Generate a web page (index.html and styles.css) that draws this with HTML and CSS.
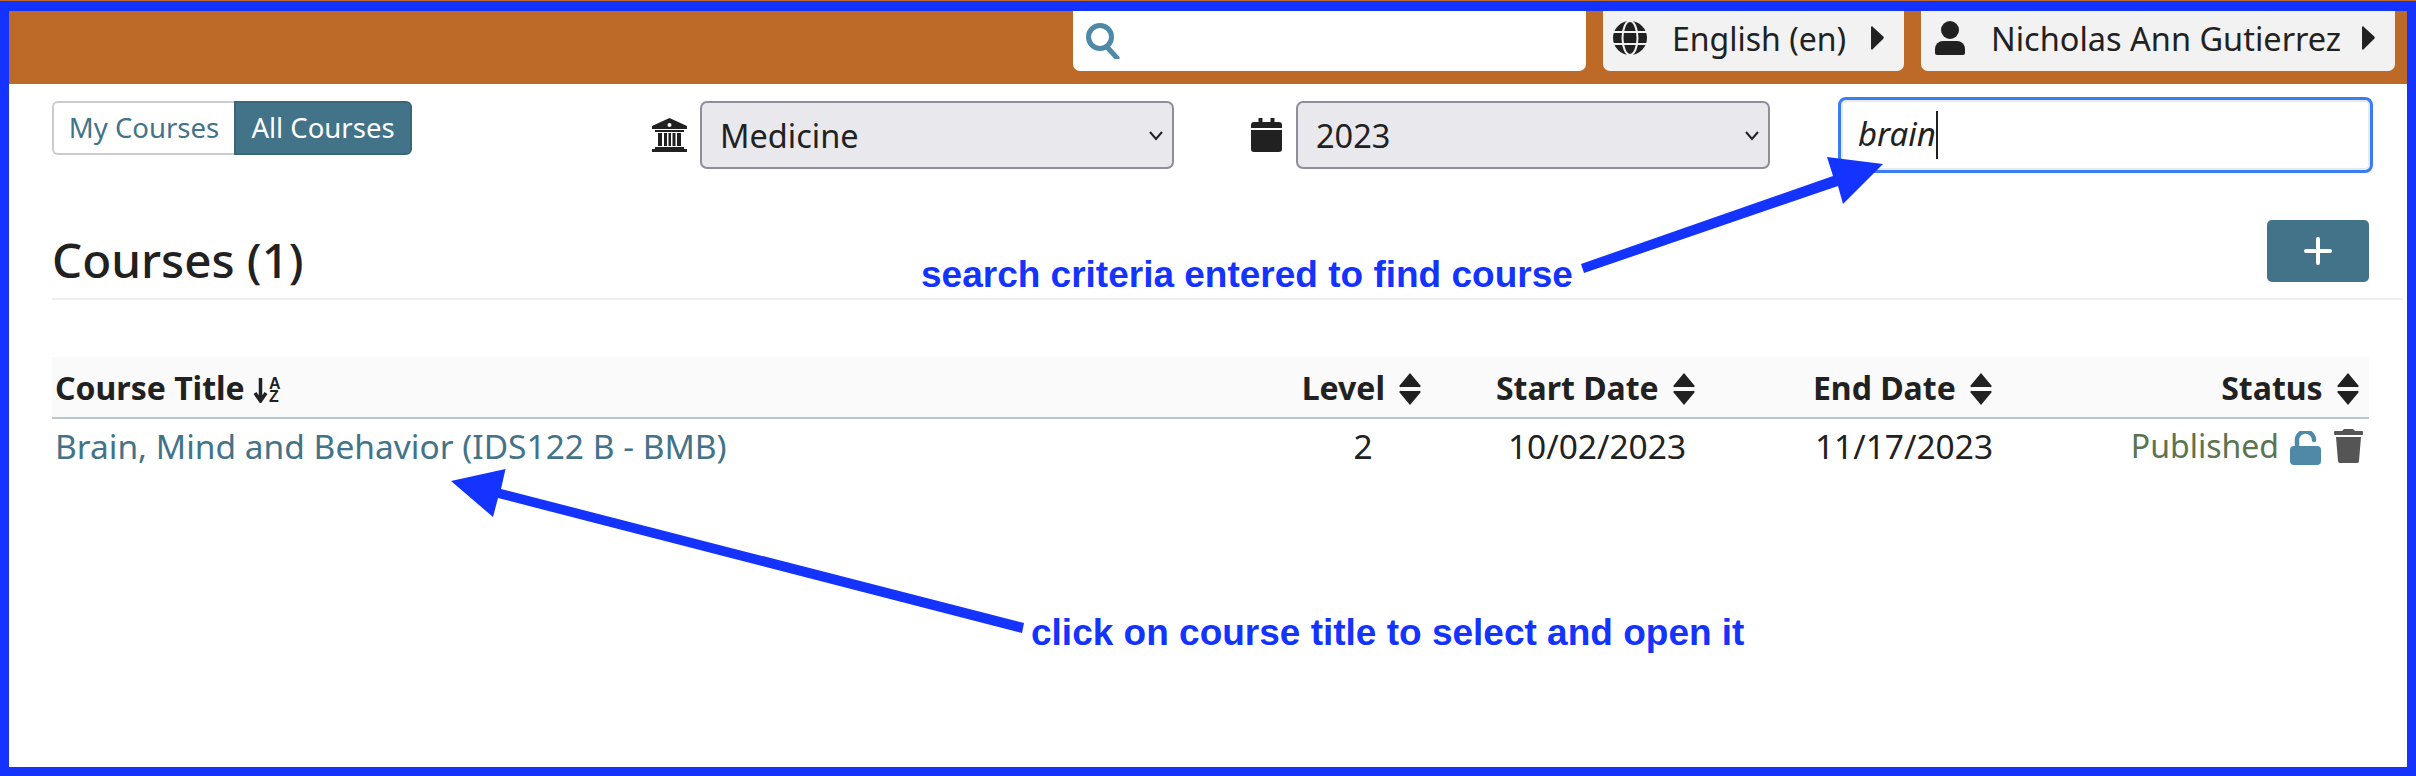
FILE: index.html
```html
<!DOCTYPE html>
<html lang="en">
  <head>
    <meta charset="UTF-8" />
    <title>Courses</title>
    <link rel="stylesheet" href="styles.css">
  </head>
  <body>
    <div class="frame">
      <header class="topbar">
        <div class="top-search">
          <svg class="top-search-icon" viewBox="0 0 34 36"><circle cx="14" cy="14" r="11.500" fill="none" stroke="#4f89a8" stroke-width="5"/><path d="M21 24l10 11" stroke="#4f89a8" stroke-width="5" stroke-linecap="round"/></svg>
        </div>
        <div class="top-menu top-lang">
          <svg class="top-icon" viewBox="0 0 34 34"><circle cx="17" cy="17" r="17" fill="#212121"/><g fill="none" stroke="#f2f2f2" stroke-width="2"><ellipse cx="17" cy="17" rx="7.500" ry="17"/><path d="M0 11h34M0 23h34"/></g></svg>
          <span class="top-label">English (en)</span>
          <svg class="top-caret" viewBox="0 0 14 26"><path d="M2 1l11 10a2 2 0 0 1 0 3L2 25a1 1 0 0 1-2-1V2a1 1 0 0 1 2-1z" fill="#212121"/></svg>
        </div>
        <div class="top-menu top-user">
          <svg class="top-icon" viewBox="0 0 30 34"><circle cx="15" cy="9" r="9" fill="#212121"/><path d="M8 20h14a8 8 0 0 1 8 8v4a2 2 0 0 1-2 2H2a2 2 0 0 1-2-2v-4a8 8 0 0 1 8-8z" fill="#212121"/></svg>
          <span class="top-label">Nicholas Ann Gutierrez</span>
          <svg class="top-caret" viewBox="0 0 14 26"><path d="M2 1l11 10a2 2 0 0 1 0 3L2 25a1 1 0 0 1-2-1V2a1 1 0 0 1 2-1z" fill="#212121"/></svg>
        </div>
      </header>

      <main class="content">
        <div class="filters">
          <div class="toggle">
            <a class="toggle-item">My Courses</a>
            <a class="toggle-item active">All Courses</a>
          </div>
          <div class="filter filter-school">
            <svg class="filter-icon" viewBox="0 0 35 34"><path d="M17.500 0L35 8v3H0V8z" fill="#212121"/><circle cx="17.500" cy="7" r="2" fill="#fff"/><path d="M3 12h29v2H3zM6 15h4v13H6zM12 15h3v13h-3zM16.500 15h2.500v13h-2.500zM20.500 15h3v13h-3zM25 15h4v13h-4zM3 29h29v2H3zM0 31h35v3H0z" fill="#212121"/></svg>
            <div class="select-wrap">
              <select class="select"><option>Medicine</option></select>
              <svg class="chevron" viewBox="0 0 14 10"><path d="M1 1l6 7 6-7" fill="none" stroke="#212121" stroke-width="2"/></svg>
            </div>
          </div>
          <div class="filter filter-year">
            <svg class="filter-icon cal" viewBox="0 0 31 34"><path d="M8 0h3v5H8zM20 0h3v5h-3z" fill="#212121" stroke="#212121" stroke-linejoin="round"/><path d="M3 4h25a3 3 0 0 1 3 3v3H0V7a3 3 0 0 1 3-3zM0 12h31v19a3 3 0 0 1-3 3H3a3 3 0 0 1-3-3z" fill="#212121"/></svg>
            <div class="select-wrap">
              <select class="select"><option>2023</option></select>
              <svg class="chevron" viewBox="0 0 14 10"><path d="M1 1l6 7 6-7" fill="none" stroke="#212121" stroke-width="2"/></svg>
            </div>
          </div>
          <div class="course-search">
            <input class="course-search-input" type="text" value="brain" />
            <span class="caret"></span>
          </div>
        </div>

        <div class="title-row">
          <h1>Courses (1)</h1>
          <button class="add-btn" type="button">
            <svg viewBox="0 0 28 28"><path d="M14 2v24M2 14h24" stroke="#fff" stroke-width="4" stroke-linecap="round"/></svg>
          </button>
        </div>

        <table class="courses">
          <colgroup>
            <col class="col-title" /><col class="col-level" /><col class="col-start" /><col class="col-end" /><col class="col-status" />
          </colgroup>
          <thead>
            <tr>
              <th class="left">Course Title
                <span class="sort-alpha">
                  <svg viewBox="0 0 15 26"><path d="M7.500 1v22M2 16l5.500 8 5.500-8" fill="none" stroke="#212121" stroke-width="3.500"/></svg>
                  <span class="sort-letters"><span>A</span><span>Z</span></span>
                </span>
              </th>
              <th>Level <svg class="sort" viewBox="0 0 22 32"><path d="M11 0l10 12a1 1 0 0 1-1 2H2a1 1 0 0 1-1-2zM2 18h18a1 1 0 0 1 1 2L11 32 1 20a1 1 0 0 1 1-2z" fill="#212121"/></svg></th>
              <th>Start Date <svg class="sort" viewBox="0 0 22 32"><path d="M11 0l10 12a1 1 0 0 1-1 2H2a1 1 0 0 1-1-2zM2 18h18a1 1 0 0 1 1 2L11 32 1 20a1 1 0 0 1 1-2z" fill="#212121"/></svg></th>
              <th>End Date <svg class="sort" viewBox="0 0 22 32"><path d="M11 0l10 12a1 1 0 0 1-1 2H2a1 1 0 0 1-1-2zM2 18h18a1 1 0 0 1 1 2L11 32 1 20a1 1 0 0 1 1-2z" fill="#212121"/></svg></th>
              <th class="right">Status <svg class="sort" viewBox="0 0 22 32"><path d="M11 0l10 12a1 1 0 0 1-1 2H2a1 1 0 0 1-1-2zM2 18h18a1 1 0 0 1 1 2L11 32 1 20a1 1 0 0 1 1-2z" fill="#212121"/></svg></th>
            </tr>
          </thead>
          <tbody>
            <tr>
              <td class="left"><a class="course-link">Brain, Mind and Behavior (IDS122 B - BMB)</a></td>
              <td>2</td>
              <td>10/02/2023</td>
              <td>11/17/2023</td>
              <td class="right">
                <div class="status-cell">
                  <span class="published">Published</span>
                  <svg class="lock" viewBox="0 0 31 34"><path d="M7 15V9a8.500 8.500 0 0 1 17 0" fill="none" stroke="#4f89a8" stroke-width="4.500" stroke-linecap="round"/><rect x="0" y="15" width="31" height="19" rx="4" fill="#4f89a8"/></svg>
                  <svg class="trash" viewBox="0 0 29 34"><path d="M10 0h9l2 2h7a1 1 0 0 1 1 1v2a1 1 0 0 1-1 1H1a1 1 0 0 1-1-1V3a1 1 0 0 1 1-1h7z" fill="#555"/><path d="M2 8h25l-2 24a2 2 0 0 1-2 2H6a2 2 0 0 1-2-2z" fill="#555"/></svg>
                </div>
              </td>
            </tr>
          </tbody>
        </table>
      </main>

      <!-- annotations drawn on top of the screenshot -->
      <svg class="arrows" viewBox="0 0 2416 776">
        <path d="M1581 263L1833 175L1827 156L1883 163L1843 203L1838 185L1584 272z" />
        <path d="M1024 622L501 488L505.500 468L451 480L493 516L498 497L1022 632z" />
      </svg>
      <div class="note note-search">search criteria entered to find course</div>
      <div class="note note-title">click on course title to select and open it</div>
    </div>
  </body>
</html>
```

FILE: styles.css
```css
* {
  margin: 0;
  padding: 0;
  box-sizing: border-box;
}
body {
  width: 2416px;
  height: 776px;
  overflow: hidden;
  background: #bd6927;
  font-family: "Noto Sans", sans-serif;
  font-size: 32px;
  color: #212121;
  padding-top: 1px;
}
.frame {
  position: relative;
  height: 775px;
  background: #fff;
  border: 9px solid #1433ff;
  border-top-width: 10px;
}

/* Top bar */
.topbar {
  height: 73px;
  background: #bd6927;
  display: flex;
  justify-content: flex-end;
  align-items: flex-start;
  gap: 17px;
  padding-right: 12px;
}
.top-search {
  width: 513px;
  height: 60px;
  background: #fff;
  border-radius: 0 0 7px 7px;
  display: flex;
  align-items: center;
  padding-left: 13px;
}
.top-search-icon {
  width: 34px;
  height: 36px;
}
.top-menu {
  height: 60px;
  background: #f2f2f2;
  border-radius: 0 0 7px 7px;
  display: flex;
  align-items: center;
  padding-bottom: 6px;
}
.top-lang {
  width: 301px;
  padding-left: 10px;
}
.top-user {
  width: 474px;
  padding-left: 12px;
}
.top-icon {
  width: 34px;
  height: 34px;
  flex: none;
}
.top-label {
  margin-left: 25px;
  font-size: 32px;
  white-space: nowrap;
  flex: 1;
}
.top-user .top-label {
  margin-left: 24px;
  font-size: 32.500px;
}
.top-caret {
  width: 13px;
  height: 24px;
  margin-right: 20px;
  flex: none;
}

/* Filters */
.content {
  padding: 0 4px 0 43px;
}
.filters {
  display: flex;
  align-items: flex-start;
  height: 136px;
  padding-top: 17px;
}
.toggle {
  display: flex;
  width: 360px;
  height: 54px;
  font-size: 27.500px;
}
.toggle-item {
  display: flex;
  align-items: center;
  justify-content: center;
  width: 182px;
  padding-bottom: 2px;
  color: #427389;
  background: #fff;
  border: 2px solid #ccc;
  border-right: none;
  border-radius: 6px 0 0 6px;
}
.toggle-item.active {
  width: 178px;
  color: #fff;
  background: #427389;
  border: 2px solid #3a667a;
  border-radius: 0 6px 6px 0;
}
.filter {
  display: flex;
  align-items: center;
  height: 68px;
}
.filter-school {
  margin-left: 240px;
}
.filter-year {
  margin-left: 77px;
}
.filter-icon {
  width: 35px;
  height: 34px;
  margin-right: 13px;
  flex: none;
}
.filter-icon.cal {
  width: 31px;
  margin-right: 14px;
}
.select-wrap {
  position: relative;
  width: 474px;
  height: 68px;
}
.select {
  appearance: none;
  width: 100%;
  height: 100%;
  padding: 0 0 0 18px;
  font: inherit;
  font-size: 32.500px;
  color: #212121;
  background: #e8e8ed;
  border: 2px solid #8e8e99;
  border-radius: 7px;
}
.chevron {
  position: absolute;
  right: 11px;
  top: 30px;
  width: 14px;
  height: 10px;
}
.course-search {
  position: relative;
  width: 535px;
  height: 76px;
  margin: -4px 0 0 68px;
}
.course-search-input {
  width: 100%;
  height: 100%;
  padding: 0 0 4px 17px;
  font: italic 33px "Noto Sans", sans-serif;
  color: #212121;
  border: 3px solid #3b7cf5;
  border-radius: 8px;
  box-shadow: inset 0 0 0 2px #e6ebf2;
  outline: none;
}
.caret {
  position: absolute;
  left: 98px;
  top: 14px;
  width: 2px;
  height: 48px;
  background: #212121;
}

/* Heading */
.title-row {
  display: flex;
  justify-content: space-between;
  align-items: center;
  height: 80px;
  padding-right: 34px;
  border-bottom: 2px solid #eee;
}
h1 {
  font-size: 47.500px;
  font-weight: 500;
  line-height: 1;
  margin-top: 2px;
}
.add-btn {
  width: 102px;
  height: 62px;
  margin-top: -16px;
  background: #427389;
  border: none;
  border-radius: 5px;
  display: flex;
  align-items: center;
  justify-content: center;
}
.add-btn svg {
  width: 28px;
  height: 28px;
}

/* Table */
.courses {
  width: 2317px;
  margin-top: 57px;
  border-collapse: collapse;
  table-layout: fixed;
}
.col-title { width: 1218px; }
.col-level { width: 186px; }
.col-start { width: 282px; }
.col-end { width: 332px; }
.col-status { width: 299px; }
th {
  height: 61px;
  padding-right: 3px;
  background: #fafafa;
  border-bottom: 2px solid #b9c8c9;
  font-weight: 700;
  font-size: 32px;
  text-align: center;
  white-space: nowrap;
}
td {
  height: 56px;
  padding-bottom: 2px;
  text-align: center;
  font-size: 33.500px;
  white-space: nowrap;
}
th.left, td.left {
  text-align: left;
  padding-left: 3px;
}
th.right {
  text-align: right;
  padding-right: 10px;
}
.sort {
  width: 22px;
  height: 32px;
  margin-left: 6px;
  vertical-align: -5px;
}
.sort-alpha {
  display: inline-flex;
  align-items: center;
  gap: 1px;
  height: 26px;
  vertical-align: -3px;
}
.sort-alpha svg {
  width: 15px;
  height: 26px;
}
.sort-letters {
  display: flex;
  flex-direction: column;
  font: 700 16px/13px "Liberation Sans", sans-serif;
}
.course-link {
  color: #427389;
}
.status-cell {
  display: flex;
  justify-content: flex-end;
  align-items: center;
  padding-right: 6px;
}
.published {
  color: #5a7350;
  font-size: 32px;
  margin-right: 11px;
}
.lock {
  width: 31px;
  height: 34px;
  margin-top: 4px;
}
.trash {
  width: 29px;
  height: 34px;
  margin-left: 13px;
}

/* Annotations */
.arrows {
  position: absolute;
  left: -9px;
  top: -10px;
  width: 2416px;
  height: 776px;
  fill: #1433ff;
  pointer-events: none;
}
.note {
  position: absolute;
  font: 700 37px "Liberation Sans", sans-serif;
  color: #1433ff;
  white-space: nowrap;
}
.note-search {
  left: 912px;
  top: 243px;
}
.note-title {
  left: 1022px;
  top: 601px;
}
```
